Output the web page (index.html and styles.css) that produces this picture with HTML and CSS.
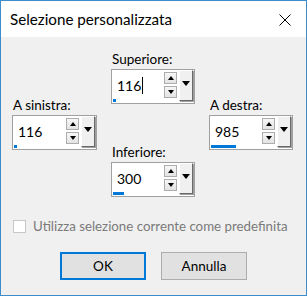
FILE: index.html
```html
<!DOCTYPE html>
<html lang="it">
<head>
<meta charset="utf-8">
<title>Selezione personalizzata</title>
<link rel="stylesheet" href="styles.css">
</head>
<body>
<div class="window">
  <div class="titlebar">
    <span class="title">Selezione personalizzata</span>
    <svg class="close" width="12" height="12" viewBox="0 0 12 12"><path d="M0.5 0.5 L11.5 11.5 M11.5 0.5 L0.5 11.5" stroke="#000" stroke-width="1" fill="none"/></svg>
  </div>
  <div class="content">
    <div class="fields">
      <div class="col col-side">
        <div class="label">A sinistra:</div>
        <div class="spin">
          <div class="spin-main">
            <div class="spin-value">116</div>
            <div class="spin-bar" style="width:3px"></div>
          </div>
          <div class="spin-btns">
            <div class="spin-btn"><span class="tri-up"></span></div>
            <div class="spin-btn"><span class="tri-down"></span></div>
          </div>
          <div class="drop-btn"><span class="tri-drop"></span></div>
        </div>
      </div>
      <div class="col col-mid">
        <div class="label">Superiore:</div>
        <div class="spin">
          <div class="spin-main">
            <div class="spin-value">116<span class="caret"></span></div>
            <div class="spin-bar" style="width:3px"></div>
          </div>
          <div class="spin-btns">
            <div class="spin-btn"><span class="tri-up"></span></div>
            <div class="spin-btn"><span class="tri-down"></span></div>
          </div>
          <div class="drop-btn"><span class="tri-drop"></span></div>
        </div>
        <div class="label label-lower">Inferiore:</div>
        <div class="spin">
          <div class="spin-main">
            <div class="spin-value">300</div>
            <div class="spin-bar" style="width:11px"></div>
          </div>
          <div class="spin-btns">
            <div class="spin-btn"><span class="tri-up"></span></div>
            <div class="spin-btn"><span class="tri-down"></span></div>
          </div>
          <div class="drop-btn"><span class="tri-drop"></span></div>
        </div>
      </div>
      <div class="col col-side">
        <div class="label">A destra:</div>
        <div class="spin">
          <div class="spin-main">
            <div class="spin-value">985</div>
            <div class="spin-bar" style="width:25px"></div>
          </div>
          <div class="spin-btns">
            <div class="spin-btn"><span class="tri-up"></span></div>
            <div class="spin-btn"><span class="tri-down"></span></div>
          </div>
          <div class="drop-btn"><span class="tri-drop"></span></div>
        </div>
      </div>
    </div>
    <div class="check">
      <span class="check-box"></span>
      <span class="check-text">Utilizza selezione corrente come predefinita</span>
    </div>
    <div class="buttons">
      <button class="btn btn-default">OK</button>
      <button class="btn">Annulla</button>
    </div>
  </div>
</div>
</body>
</html>
```

FILE: styles.css
```css
* { box-sizing: border-box; }
html, body { margin: 0; padding: 0; }
body {
  font-family: "Lato", "Noto Sans", sans-serif;
  font-size: 13.5px;
  color: #000;
  background: #f0f0f0;
}
.window {
  width: 307px;
  height: 296px;
  border: 1px solid #3d8dcc;
  background: #f0f0f0;
  display: flex;
  flex-direction: column;
}
.titlebar {
  height: 36px;
  background: #fff;
  display: flex;
  align-items: center;
  justify-content: space-between;
  padding: 0 15px 0 9px;
}
.title {
  font-size: 15.2px;
  line-height: 18px;
}
.close { display: block; margin-top: 1px; }
.content {
  flex: 1;
  padding: 0 0 0 11px;
  display: flex;
  flex-direction: column;
}
.fields {
  display: grid;
  grid-template-columns: 85px 84px 84px;
  column-gap: 14px;
}
.col { display: flex; flex-direction: column; }
.col-side { padding-top: 60px; }
.col-mid { padding-top: 14px; }
.label {
  line-height: 17px;
  height: 17px;
  margin-bottom: 1px;
  padding-left: 1px;
  white-space: nowrap;
}
.label-lower { margin-top: 40px; }
.spin {
  height: 35px;
  border: 1px solid #a0a0a0;
  background: #fff;
  display: flex;
  align-items: flex-start;
}
.spin-main {
  flex: 1;
  height: 100%;
  display: flex;
  flex-direction: column;
}
.spin-value {
  flex: 1;
  display: flex;
  align-items: center;
  padding: 1px 0 0 5px;
  font-size: 14px;
}
.caret {
  display: inline-block;
  width: 1px;
  height: 17px;
  background: #000;
  margin-left: 1px;
}
.spin-bar {
  height: 3px;
  background: #0078d7;
  margin: 0 0 1px 1px;
}
.spin-btns {
  display: flex;
  flex-direction: column;
  gap: 2px;
  margin-top: 2px;
}
.spin-btn {
  width: 13px;
  height: 12px;
  border: 1px solid #adadad;
  background: linear-gradient(#f7f7f7, #e3e3e3);
  display: flex;
  align-items: center;
  justify-content: center;
}
.tri-up, .tri-down {
  width: 0; height: 0;
  border-left: 3.5px solid transparent;
  border-right: 3.5px solid transparent;
}
.tri-up { border-bottom: 4px solid #000; }
.tri-down { border-top: 4px solid #000; }
.drop-btn {
  width: 14px;
  height: 31px;
  margin: 0 1px 0 2px;
  background: #f0f0f0;
  border-top: 1px solid #fff;
  border-left: 1px solid #fff;
  border-right: 1px solid #696969;
  border-bottom: 1px solid #696969;
  box-shadow: 1px 1px 0 #a0a0a0;
  display: flex;
  justify-content: center;
  padding-top: 10px;
}
.tri-drop {
  width: 0; height: 0;
  border-left: 4.5px solid transparent;
  border-right: 4.5px solid transparent;
  border-top: 5px solid #000;
}
.check {
  display: flex;
  align-items: center;
  margin-top: 20px;
  margin-left: 1px;
  gap: 7px;
}
.check-box {
  width: 13px;
  height: 13px;
  border: 1px solid #c8c8c8;
  background: #fff;
  flex: none;
}
.check-text {
  color: #7a7a7a;
  font-size: 13.3px;
  line-height: 18px;
  white-space: nowrap;
}
.buttons {
  display: flex;
  justify-content: center;
  gap: 15px;
  margin-top: 17px;
  margin-left: -11px;
}
.btn {
  width: 86px;
  height: 28px;
  font-family: inherit;
  font-size: 13.5px;
  color: #000;
  background: #e1e1e1;
  border: 1px solid #adadad;
  border-radius: 0;
  padding: 0;
}
.btn-default { border: 2px solid #0078d7; }
```
